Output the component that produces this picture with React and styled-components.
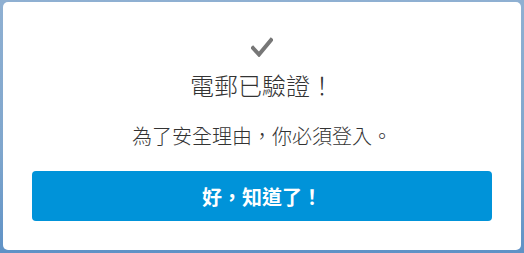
import React from 'react';
import styled, { createGlobalStyle } from 'styled-components';

const GlobalStyle = createGlobalStyle`
    html, body {
        margin: 0;
        padding: 0;
        width: 524px;
        height: 253px;
        overflow: hidden;
    }
    body {
        background: linear-gradient(180deg, #8fb0d2 0%, #7fa6cd 60%, #5f92c6 100%);
        font-family: "Liberation Sans", "Noto Sans CJK TC", sans-serif;
    }
`;

const Page = styled.div`
    padding: 2px 3px 3px 3px;
    box-sizing: border-box;
    height: 253px;
`;

const Card = styled.div`
    display: flex;
    flex-direction: column;
    align-items: center;
    box-sizing: border-box;
    height: 248px;
    background: #ffffff;
    border-radius: 5px;
    padding: 35px 29px 29px 29px;
`;

const Check = styled.svg`
    display: block;
    width: 22px;
    height: 20px;
`;

const Title = styled.h2`
    margin: 13px 0 0 0;
    font-family: "Noto Sans CJK TC", sans-serif;
    font-size: 24px;
    font-weight: 300;
    line-height: 30px;
    color: #333333;
`;

const Message = styled.p`
    margin: 21px 0 0 0;
    font-family: "Noto Sans CJK TC", sans-serif;
    font-size: 20px;
    font-weight: 300;
    line-height: 30px;
    color: #333333;
`;

const OkButton = styled.button`
    margin-top: 20px;
    width: 100%;
    height: 50px;
    border: none;
    border-radius: 4px;
    background: #0093d9;
    color: #ffffff;
    font-family: "Noto Sans CJK TC", sans-serif;
    font-size: 20px;
    font-weight: 700;
    cursor: pointer;
`;

const App = () => {
    return (
        <>
            <GlobalStyle />
            <Page>
                <Card>
                    <Check viewBox="0 0 22 20">
                        <polyline points="2,11 8,17.5 20,3" fill="none" stroke="#777777" strokeWidth="4" strokeLinecap="square" />
                    </Check>
                    <Title>電郵已驗證！</Title>
                    <Message>為了安全理由，你必須登入。</Message>
                    <OkButton type="button">好，知道了！</OkButton>
                </Card>
            </Page>
        </>
    )
}

export default App;
